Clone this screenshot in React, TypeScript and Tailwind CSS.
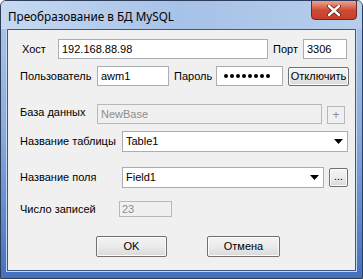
import React from "react";

const font = { fontFamily: '"Liberation Sans", Arial, sans-serif' };

function Arrow() {
  return (
    <svg width="9" height="6" viewBox="0 0 9 6">
      <polygon points="0,0 9,0 4.5,5" fill="#000" />
    </svg>
  );
}

function Btn({ children, className }: { children: React.ReactNode; className: string }) {
  return (
    <div
      className={
        "flex items-center justify-center border border-[#707070] rounded-[2px] bg-gradient-to-b from-[#f4f4f4] via-[#ebebeb] to-[#d9d9d9] text-[11px] text-black shadow-[inset_0_0_0_1px_#fcfcfc] " +
        className
      }
    >
      {children}
    </div>
  );
}

export default function App() {
  return (
    <div
      className="w-[363px] h-[279px] flex flex-col border border-[#2c3e5c] rounded-t-[6px] bg-gradient-to-b from-[#b0c9ea] via-[#86a9dd] to-[#4470bd] overflow-hidden"
      style={font}
    >
      {/* Title bar */}
      <div className="h-[28px] flex items-start relative bg-gradient-to-r from-[#c6d9f0] via-[#a7c2e8] to-[#b7cdeb]">
        <div
          className="pl-[7px] pt-[7px] text-[11.7px] text-black leading-[16px]"
          style={{ fontFamily: '"Noto Sans", "Open Sans", sans-serif' }}
        >
          Преобразование в БД MySQL
        </div>
        <div className="absolute right-[5px] top-[-1px] w-[46px] h-[20px] rounded-b-[4px] border border-[#6b2a22] bg-gradient-to-b from-[#e8a493] via-[#cf4a34] to-[#c3402a] flex items-center justify-center">
          <svg width="14" height="11" viewBox="0 0 14 11">
            <path d="M2 1 L12 10 M12 1 L2 10" stroke="#5a1a10" strokeWidth="4" strokeLinecap="round" />
            <path d="M2 1 L12 10 M12 1 L2 10" stroke="#ffffff" strokeWidth="2.4" strokeLinecap="round" />
          </svg>
        </div>
      </div>

      {/* Content panel */}
      <div className="flex-1 mx-[6px] mb-[7px] border border-[#3f5680] shadow-[0_0_0_1px_#c5d8f2]">
        <div className="w-full h-full bg-[#f0f0f0] text-[11px] text-black flex flex-col">
          {/* Row 1 */}
          <div className="flex items-center h-[20px] mt-[9px]">
            <span className="ml-[14px] w-[36px]">Хост</span>
            <div className="w-[210px] h-[20px] bg-white border border-[#abadb3] pl-[3px] flex items-center">192.168.88.98</div>
            <span className="ml-[5px] w-[30px]">Порт</span>
            <div className="w-[44px] h-[20px] bg-white border border-[#abadb3] pl-[3px] flex items-center">3306</div>
          </div>
          {/* Row 2 */}
          <div className="flex items-center h-[20px] mt-[7px]">
            <span className="ml-[12px] w-[77px]">Пользователь</span>
            <div className="w-[72px] h-[20px] bg-white border border-[#abadb3] pl-[3px] flex items-center">awm1</div>
            <span className="ml-[5px] w-[42px]">Пароль</span>
            <div className="w-[67px] h-[20px] bg-white border border-[#abadb3] pl-[7px] flex items-center gap-[2px]">
              {Array.from({ length: 8 }).map((_, i) => (
                <span key={i} className="w-[4px] h-[4px] rounded-full bg-black" />
              ))}
            </div>
            <Btn className="ml-[5px] w-[61px] h-[19px]">Отключить</Btn>
          </div>
          {/* Row 3 */}
          <div className="flex items-center h-[20px] mt-[18px]">
            <span className="ml-[12px] w-[77px] -mt-[4px]">База данных</span>
            <div className="w-[225px] h-[20px] bg-[#f0f0f0] border border-[#b8b8b8] pl-[3px] flex items-center text-[#8d8d8d]">NewBase</div>
            <div className="ml-[5px] mt-[2px] w-[18px] h-[18px] border border-[#b8b8b8] flex items-center justify-center text-[#8d8d8d] text-[12px]">+</div>
          </div>
          {/* Row 4 */}
          <div className="flex items-center h-[21px] mt-[7px]">
            <span className="ml-[12px] w-[102px]">Название таблицы</span>
            <div className="w-[226px] h-[21px] bg-white border border-[#abadb3] pl-[3px] pr-[4px] flex items-center justify-between">
              <span>Table1</span>
              <Arrow />
            </div>
          </div>
          {/* Row 5 */}
          <div className="flex items-center h-[21px] mt-[15px]">
            <span className="ml-[12px] w-[102px]">Название поля</span>
            <div className="w-[202px] h-[21px] bg-white border border-[#abadb3] pl-[3px] pr-[4px] flex items-center justify-between">
              <span>Field1</span>
              <Arrow />
            </div>
            <Btn className="ml-[5px] w-[19px] h-[19px] items-end pb-[2px]">...</Btn>
          </div>
          {/* Row 6 */}
          <div className="flex items-center h-[16px] mt-[13px]">
            <span className="ml-[12px] w-[99px]">Число записей</span>
            <div className="w-[53px] h-[16px] bg-[#f0f0f0] border border-[#b8b8b8] pl-[2px] flex items-center text-[#8d8d8d]">23</div>
          </div>
          {/* Buttons */}
          <div className="flex items-center h-[21px] mt-[19px]">
            <Btn className="ml-[88px] w-[71px] h-[21px]">OK</Btn>
            <Btn className="ml-[40px] w-[73px] h-[21px]">Отмена</Btn>
          </div>
        </div>
      </div>
    </div>
  );
}
